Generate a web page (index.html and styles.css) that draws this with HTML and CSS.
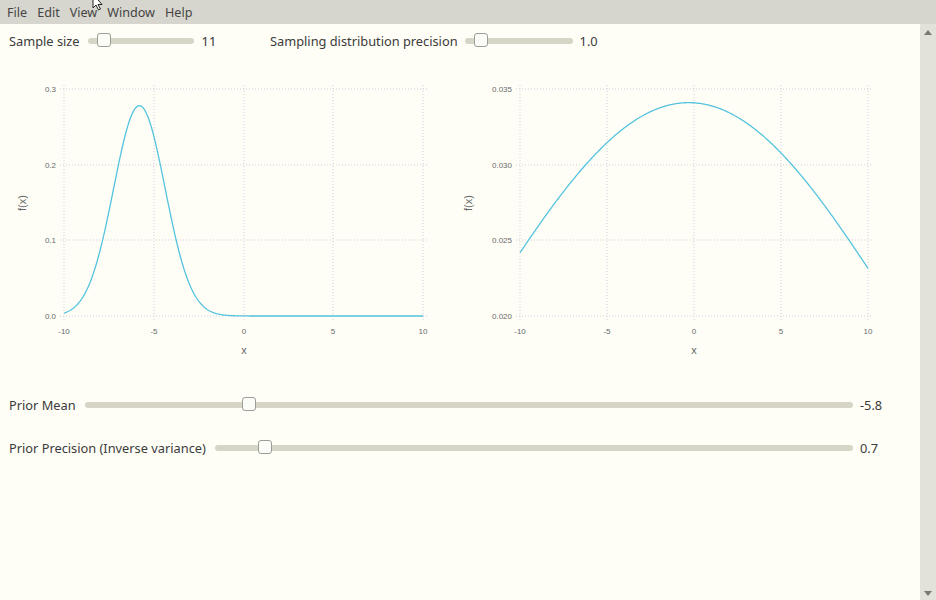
FILE: index.html
```html
<!DOCTYPE html>
<html>
<head>
<meta charset="utf-8">
<link rel="stylesheet" href="styles.css">
</head>
<body>
<div class="menubar">
  <span class="menu-item">File</span>
  <span class="menu-item">Edit</span>
  <span class="menu-item">View</span>
  <span class="menu-item">Window</span>
  <span class="menu-item">Help</span>
  <svg class="cursor" width="14" height="12" viewBox="0 0 14 12"><path d="M1 -6 L1 8 L4 5 L6.5 10 L8.5 9 L6 4.5 L10 4.5 Z" fill="#fff" stroke="#222" stroke-width="1"/></svg>
</div>
<div class="window">
  <div class="content">
    <div class="top-row">
      <div class="ctl ctl-sample">
        <span class="label">Sample size</span>
        <div class="track track-sample"><div class="thumb" style="left:9%"></div></div>
        <span class="value">11</span>
      </div>
      <div class="ctl">
        <span class="label">Sampling distribution precision</span>
        <div class="track track-prec"><div class="thumb" style="left:9%"></div></div>
        <span class="value value-prec">1.0</span>
      </div>
    </div>

    <div class="charts">
      <svg class="chart chart-left" width="456" height="300" viewBox="0 0 456 300">
        <g class="grid">
          <line x1="60" y1="19" x2="427" y2="19"/>
          <line x1="60" y1="95" x2="427" y2="95"/>
          <line x1="60" y1="170" x2="427" y2="170"/>
          <line x1="60" y1="246" x2="427" y2="246"/>
          <line x1="64" y1="15" x2="64" y2="250"/>
          <line x1="154" y1="15" x2="154" y2="250"/>
          <line x1="244" y1="15" x2="244" y2="250"/>
          <line x1="333" y1="15" x2="333" y2="250"/>
          <line x1="423" y1="15" x2="423" y2="250"/>
        </g>
        <g class="ytick">
          <text x="56" y="22">0.3</text>
          <text x="56" y="98">0.2</text>
          <text x="56" y="173">0.1</text>
          <text x="56" y="249">0.0</text>
        </g>
        <g class="xtick">
          <text x="64" y="264">-10</text>
          <text x="154" y="264">-5</text>
          <text x="244" y="264">0</text>
          <text x="333" y="264">5</text>
          <text x="423" y="264">10</text>
        </g>
        <text class="axis-label" x="244" y="284">x</text>
        <text class="axis-label" transform="translate(26,133) rotate(-90)">f(x)</text>
        <path id="curve-left" class="curve" d=""/>
      </svg>
      <svg class="chart chart-right" width="450" height="300" viewBox="0 0 450 300">
        <g class="grid">
          <line x1="60" y1="19" x2="416" y2="19"/>
          <line x1="60" y1="95" x2="416" y2="95"/>
          <line x1="60" y1="170" x2="416" y2="170"/>
          <line x1="60" y1="246" x2="416" y2="246"/>
          <line x1="64" y1="15" x2="64" y2="250"/>
          <line x1="151" y1="15" x2="151" y2="250"/>
          <line x1="238" y1="15" x2="238" y2="250"/>
          <line x1="325" y1="15" x2="325" y2="250"/>
          <line x1="412" y1="15" x2="412" y2="250"/>
        </g>
        <g class="ytick">
          <text x="56" y="22">0.035</text>
          <text x="56" y="98">0.030</text>
          <text x="56" y="173">0.025</text>
          <text x="56" y="249">0.020</text>
        </g>
        <g class="xtick">
          <text x="64" y="264">-10</text>
          <text x="151" y="264">-5</text>
          <text x="238" y="264">0</text>
          <text x="325" y="264">5</text>
          <text x="412" y="264">10</text>
        </g>
        <text class="axis-label" x="238" y="284">x</text>
        <text class="axis-label" transform="translate(16,133) rotate(-90)">f(x)</text>
        <path id="curve-right" class="curve" d=""/>
      </svg>
    </div>

    <div class="wide-row row-mean">
      <span class="label">Prior Mean</span>
      <div class="track track-wide"><div class="thumb" style="left:20.5%"></div></div>
      <span class="value wide-value">-5.8</span>
    </div>
    <div class="wide-row row-precision">
      <span class="label">Prior Precision (Inverse variance)</span>
      <div class="track track-wide"><div class="thumb" style="left:6.7%"></div></div>
      <span class="value wide-value">0.7</span>
    </div>
  </div>
  <div class="scrollbar">
    <span class="arrow arrow-up"></span>
    <span class="arrow arrow-down"></span>
  </div>
</div>
<script src="script.js"></script>
</body>
</html>
```

FILE: styles.css
```css
html, body {
  margin: 0;
  padding: 0;
  height: 100%;
}
body {
  font-family: "Noto Sans", "DejaVu Sans", sans-serif;
  font-size: 12.8px;
  color: #3b3b3b;
  background: #fefef7;
  overflow: hidden;
}
.menubar {
  position: relative;
  height: 24px;
  background: #d7d6ce;
  display: flex;
  align-items: center;
  padding-left: 7px;
  gap: 10px;
  color: #444;
  font-size: 12.6px;
}
.cursor {
  position: absolute;
  left: 92px;
  top: 0;
}
.window {
  display: flex;
  height: 576px;
}
.content {
  flex: 1;
  background: #fefef7;
}
.scrollbar {
  width: 16px;
  background: #e3e2da;
  position: relative;
}
.arrow {
  position: absolute;
  left: 4px;
  width: 0;
  height: 0;
  border-left: 4px solid transparent;
  border-right: 4px solid transparent;
}
.arrow-up {
  top: 6px;
  border-bottom: 5px solid #7a7a72;
}
.arrow-down {
  bottom: 4px;
  border-top: 5px solid #7a7a72;
}
.top-row {
  display: flex;
  align-items: center;
  height: 22px;
  margin-top: 6px;
  padding-left: 9px;
}
.ctl {
  display: flex;
  align-items: center;
}
.ctl-sample {
  width: 261px;
}
.track {
  position: relative;
  height: 6px;
  border-radius: 3px;
  background: #d6d5c6;
  margin-left: 10px;
}
.track-sample {
  width: 106px;
  margin-left: 8px;
}
.track-prec {
  width: 108px;
  margin-left: 7px;
}
.thumb {
  position: absolute;
  top: -5px;
  width: 12px;
  height: 12px;
  background: #fbfbf8;
  border: 1px solid #9d9d97;
  border-radius: 3px;
}
.value {
  margin-left: 8px;
}
.value-prec {
  margin-left: 7px;
}
.charts {
  display: flex;
  margin-top: 18px;
  height: 300px;
}
.chart {
  display: block;
}
.grid line {
  stroke: #cfcfe0;
  stroke-width: 1;
  stroke-dasharray: 1 2;
}
.ytick text {
  font-family: "Liberation Sans", sans-serif;
  font-size: 8px;
  fill: #6a6a6a;
  text-anchor: end;
}
.xtick text {
  font-family: "Liberation Sans", sans-serif;
  font-size: 8px;
  fill: #6a6a6a;
  text-anchor: middle;
}
.axis-label {
  font-family: "Liberation Sans", sans-serif;
  font-size: 11px;
  fill: #666;
  text-anchor: middle;
}
.curve {
  fill: none;
  stroke: #55c3de;
  stroke-width: 1.3;
}
.wide-row {
  display: flex;
  align-items: center;
  height: 22px;
  padding-left: 9px;
}
.row-mean {
  margin-top: 24px;
}
.row-precision {
  margin-top: 21px;
}
.track-wide {
  flex: 1;
  margin-left: 9px;
}
.wide-value {
  width: 60px;
  margin-left: 7px;
}
```

FILE: script.js
```js
function gauss(x, m, s) {
  return Math.exp(-(x - m) * (x - m) / (2 * s * s)) / (s * Math.sqrt(2 * Math.PI));
}
function buildPath(id, m, s, x0, x1, ymin, ymax, top, bottom) {
  var d = "";
  for (var i = 0; i <= 400; i++) {
    var x = -10 + 20 * i / 400;
    var f = gauss(x, m, s);
    var px = x0 + (x + 10) / 20 * (x1 - x0);
    var py = bottom - (f - ymin) / (ymax - ymin) * (bottom - top);
    d += (i === 0 ? "M" : "L") + px.toFixed(2) + " " + py.toFixed(2);
  }
  document.getElementById(id).setAttribute("d", d);
}
buildPath("curve-left", -5.8, 1.435, 64, 423, 0, 0.3, 19, 246);
buildPath("curve-right", -0.3, 11.7, 64, 412, 0.02, 0.035, 19, 246);
```
